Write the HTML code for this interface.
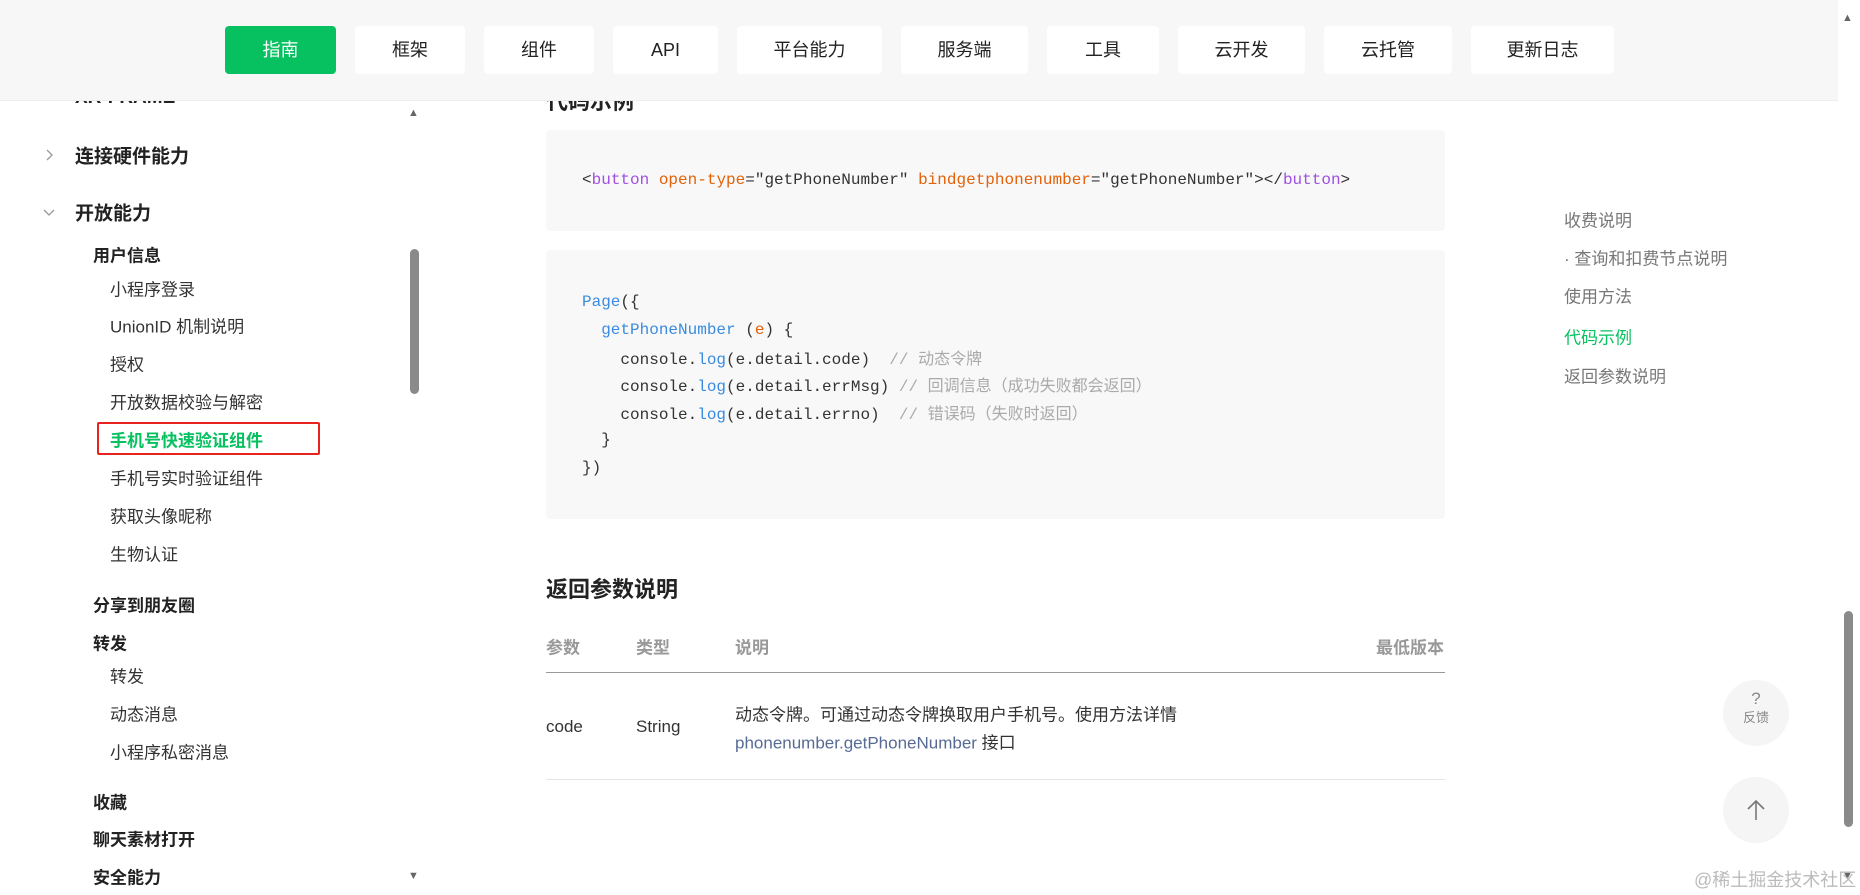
<!DOCTYPE html>
<html><head><meta charset="utf-8"><style>
*{margin:0;padding:0;box-sizing:border-box}
body{width:1860px;height:895px;overflow:hidden;background:#fff;position:relative;font-family:"Liberation Sans","Noto Sans CJK SC",sans-serif;color:#333}
.a{position:absolute;white-space:nowrap}
.hdr{position:absolute;left:0;top:0;width:1838px;height:101px;background:#f7f7f7;border-bottom:1px solid #ececec;z-index:5}
.btn{position:absolute;top:26px;height:48px;background:#fff;border-radius:4px;font-size:18px;line-height:48px;text-align:center;color:#222}
.btn.on{background:#07c160;color:#fff}
.s1{font-size:19px;font-weight:bold;color:#222;transform:translateY(-50%)}
.s2{font-size:17px;font-weight:bold;color:#222;transform:translateY(-50%)}
.s3{font-size:17px;color:#333;transform:translateY(-50%)}
.code{position:absolute;left:546px;width:899px;background:#f8f8f8;border-radius:4px}
.mono{font-family:"Liberation Mono","Noto Sans CJK SC",monospace;font-size:16px;color:#333;transform:translateY(-50%);white-space:pre}
.p{color:#a050e0}.o{color:#e36209}.b{color:#3a8be0}.c{color:#aaa}
.toc{font-size:17px;color:#777;transform:translateY(-50%);left:1564px}
.th{font-size:17px;font-weight:bold;color:#999;transform:translateY(-50%)}
.td{font-size:17px;color:#333;transform:translateY(-50%)}
.circ{position:absolute;width:66px;height:66px;border-radius:50%;background:#f5f5f5;left:1723px}
</style></head><body>
<div class="hdr">
<div class="btn on" style="left:225px;width:111px">指南</div>
<div class="btn" style="left:355px;width:110px">框架</div>
<div class="btn" style="left:484px;width:110px">组件</div>
<div class="btn" style="left:613px;width:105px">API</div>
<div class="btn" style="left:737px;width:145px">平台能力</div>
<div class="btn" style="left:901px;width:127px">服务端</div>
<div class="btn" style="left:1047px;width:112px">工具</div>
<div class="btn" style="left:1178px;width:127px">云开发</div>
<div class="btn" style="left:1324px;width:128px">云托管</div>
<div class="btn" style="left:1471px;width:143px">更新日志</div>
</div>
<div class="a" style="left:1838px;top:0;width:22px;height:895px;background:#fff"></div>
<div class="a" style="left:1844px;top:611px;width:9px;height:216px;background:#8a8a8a;border-radius:5px"></div>
<div class="a" style="left:1842px;top:12px;font-size:11px;color:#666">▲</div>
<div class="a" style="left:1842px;top:870px;font-size:11px;color:#666">▼</div>

<div class="a s1" style="left:75px;top:98px">XR-FRAME</div>
<svg class="a" style="left:44px;top:148px" width="10" height="14" viewBox="0 0 10 14"><path d="M3 2l5 5-5 5" fill="none" stroke="#999" stroke-width="1.3"/></svg>
<div class="a s1" style="left:75px;top:155px">连接硬件能力</div>
<svg class="a" style="left:42px;top:207px" width="14" height="10" viewBox="0 0 14 10"><path d="M2 3l5 5 5-5" fill="none" stroke="#999" stroke-width="1.3"/></svg>
<div class="a s1" style="left:75px;top:212px">开放能力</div>
<div class="a s2" style="left:93px;top:254px">用户信息</div>
<div class="a s3" style="left:110px;top:288px">小程序登录</div>
<div class="a s3" style="left:110px;top:325px">UnionID 机制说明</div>
<div class="a s3" style="left:110px;top:363px">授权</div>
<div class="a s3" style="left:110px;top:401px">开放数据校验与解密</div>
<div class="a" style="left:97px;top:422px;width:223px;height:33px;border:2px solid #e8231f;border-radius:2px"></div>
<div class="a s3" style="left:110px;top:439px;color:#07c160;font-weight:bold">手机号快速验证组件</div>
<div class="a s3" style="left:110px;top:477px">手机号实时验证组件</div>
<div class="a s3" style="left:110px;top:515px">获取头像昵称</div>
<div class="a s3" style="left:110px;top:553px">生物认证</div>
<div class="a s2" style="left:93px;top:604px">分享到朋友圈</div>
<div class="a s2" style="left:93px;top:642px">转发</div>
<div class="a s3" style="left:110px;top:675px">转发</div>
<div class="a s3" style="left:110px;top:713px">动态消息</div>
<div class="a s3" style="left:110px;top:751px">小程序私密消息</div>
<div class="a s2" style="left:93px;top:801px">收藏</div>
<div class="a s2" style="left:93px;top:838px">聊天素材打开</div>
<div class="a s2" style="left:93px;top:876px">安全能力</div>
<div class="a" style="left:408px;top:107px;font-size:11px;color:#666">▲</div>
<div class="a" style="left:410px;top:249px;width:9px;height:145px;background:#8a8a8a;border-radius:5px"></div>
<div class="a" style="left:408px;top:870px;font-size:11px;color:#666">▼</div>

<div class="a" style="left:546px;top:84px;font-size:22px;font-weight:bold;color:#222">代码示例</div>
<div class="code" style="top:130px;height:101px"></div>
<div class="a mono" style="left:582px;top:180px">&lt;<span class="p">button</span> <span class="o">open-type</span>="getPhoneNumber" <span class="o">bindgetphonenumber</span>="getPhoneNumber"&gt;&lt;/<span class="p">button</span>&gt;</div>
<div class="code" style="top:250px;height:269px"></div>
<div class="a mono" style="left:582px;top:302px"><span class="b">Page</span>({</div>
<div class="a mono" style="left:582px;top:330px">  <span class="b">getPhoneNumber</span> (<span class="o">e</span>) {</div>
<div class="a mono" style="left:582px;top:357px">    console.<span class="b">log</span>(e.detail.code)  <span class="c">// 动态令牌</span></div>
<div class="a mono" style="left:582px;top:384px">    console.<span class="b">log</span>(e.detail.errMsg) <span class="c">// 回调信息（成功失败都会返回）</span></div>
<div class="a mono" style="left:582px;top:412px">    console.<span class="b">log</span>(e.detail.errno)  <span class="c">// 错误码（失败时返回）</span></div>
<div class="a mono" style="left:582px;top:440px">  }</div>
<div class="a mono" style="left:582px;top:468px">})</div>

<div class="a" style="left:546px;top:572px;font-size:22px;font-weight:bold;color:#222">返回参数说明</div>
<div class="a th" style="left:546px;top:646px">参数</div>
<div class="a th" style="left:636px;top:646px">类型</div>
<div class="a th" style="left:735px;top:646px">说明</div>
<div class="a th" style="left:1376px;top:646px">最低版本</div>
<div class="a" style="left:546px;top:672px;width:899px;height:1px;background:#999"></div>
<div class="a td" style="left:546px;top:727px">code</div>
<div class="a td" style="left:636px;top:727px">String</div>
<div class="a td" style="left:735px;top:713px">动态令牌。可通过动态令牌换取用户手机号。使用方法详情</div>
<div class="a td" style="left:735px;top:741px"><span style="color:#576b95">phonenumber.getPhoneNumber</span> 接口</div>
<div class="a" style="left:546px;top:779px;width:899px;height:1px;background:#e5e5e5"></div>

<div class="a toc" style="top:219px">收费说明</div>
<div class="a toc" style="top:257px">· 查询和扣费节点说明</div>
<div class="a toc" style="top:295px">使用方法</div>
<div class="a toc" style="top:336px;color:#07c160">代码示例</div>
<div class="a toc" style="top:375px">返回参数说明</div>

<div class="circ" style="top:680px"></div>
<div class="a" style="left:1723px;top:690px;width:66px;text-align:center;font-size:17px;color:#888;line-height:18px">?<br><span style="font-size:13px">反馈</span></div>
<div class="circ" style="top:777px"></div>
<svg class="a" style="left:1745px;top:798px" width="22" height="24" viewBox="0 0 22 24"><path d="M11 22V3M3 11l8-8 8 8" fill="none" stroke="#777" stroke-width="1.6"/></svg>
<div class="a" style="left:1694px;top:866px;font-size:18px;color:#bbb">@稀土掘金技术社区</div>
</body></html>
